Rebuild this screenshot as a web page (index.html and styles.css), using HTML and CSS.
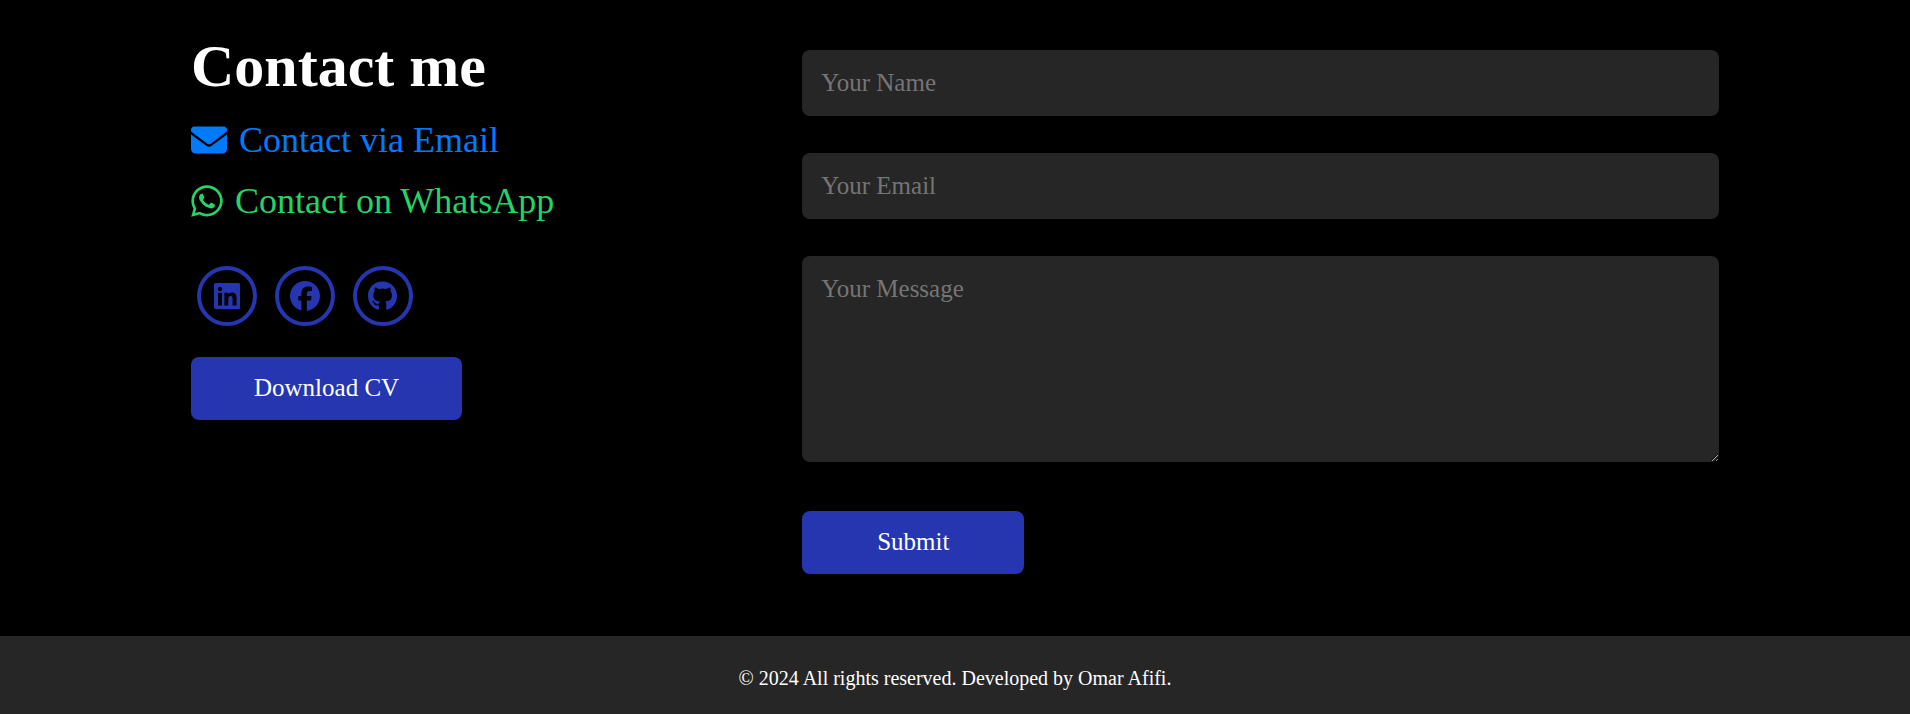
FILE: index.html
```html
<!DOCTYPE html>
<html lang="en">
<head>
<meta charset="utf-8">
<meta name="viewport" content="width=device-width, initial-scale=1">
<title>Contact me</title>
<link rel="stylesheet" href="styles.css">
</head>
<body>
<section class="contact">
  <div class="contact-info">
    <h1 class="title">Contact me</h1>
    <a class="contact-link email" href="#email">
      <svg class="envelope" viewBox="0 0 512 512" aria-hidden="true"><path d="M48 64C21.500 64 0 85.500 0 112c0 15.100 7.100 29.300 19.200 38.400L236.800 313.600c11.400 8.500 27 8.500 38.400 0L492.800 150.400c12.100-9.100 19.200-23.300 19.200-38.400c0-26.500-21.500-48-48-48H48zM0 176V384c0 35.300 28.700 64 64 64H448c35.300 0 64-28.700 64-64V176L294.400 339.200c-22.800 17.100-54 17.100-76.800 0L0 176z"/></svg>
      <span>Contact via Email</span>
    </a>
    <a class="contact-link whatsapp" href="#whatsapp">
      <svg class="phone" viewBox="0 0 448 512" aria-hidden="true"><path d="M380.900 97.100C339 55.100 283.200 32 223.900 32c-122.400 0-222 99.600-222 222 0 39.100 10.200 77.300 29.600 111L0 480l117.700-30.900c32.400 17.700 68.900 27 106.100 27h.1c122.300 0 224.100-99.600 224.100-222 0-59.300-25.200-115-67.100-157zm-157 341.600c-33.200 0-65.700-8.900-94-25.700l-6.700-4-69.800 18.300L72 359.200l-4.400-7c-18.500-29.400-28.200-63.300-28.200-98.200 0-101.700 82.800-184.500 184.600-184.500 49.300 0 95.600 19.200 130.400 54.100 34.800 34.900 56.200 81.200 56.100 130.500 0 101.800-84.900 184.600-186.600 184.600zm101.200-138.200c-5.500-2.800-32.800-16.200-37.900-18-5.100-1.900-8.800-2.800-12.500 2.800-3.700 5.600-14.300 18-17.600 21.800-3.200 3.700-6.500 4.200-12 1.400-32.600-16.300-54-29.100-75.500-66-5.700-9.800 5.700-9.100 16.300-30.300 1.800-3.700.9-6.900-.5-9.700-1.400-2.800-12.500-30.100-17.100-41.200-4.500-10.800-9.100-9.300-12.500-9.500-3.200-.2-6.900-.2-10.600-.2-3.700 0-9.700 1.400-14.800 6.900-5.100 5.600-19.400 19-19.400 46.300 0 27.300 19.900 53.700 22.600 57.400 2.800 3.700 39.100 59.700 94.800 83.800 35.200 15.200 49 16.500 66.600 13.900 10.700-1.600 32.800-13.400 37.400-26.400 4.600-13 4.600-24.100 3.200-26.400-1.300-2.500-5-3.900-10.500-6.600z"/></svg>
      <span>Contact on WhatsApp</span>
    </a>
    <div class="social">
      <a class="social-link" href="#linkedin" aria-label="LinkedIn">
        <svg viewBox="0 0 448 512" aria-hidden="true"><path d="M416 32H31.900C14.300 32 0 46.500 0 64.300v383.400C0 465.500 14.300 480 31.900 480H416c17.600 0 32-14.500 32-32.300V64.300c0-17.800-14.400-32.300-32-32.300zM135.400 416H69V202.200h66.500V416zm-33.200-243c-21.300 0-38.500-17.300-38.500-38.500S80.900 96 102.200 96c21.200 0 38.500 17.300 38.500 38.500 0 21.300-17.200 38.500-38.500 38.500zm282.100 243h-66.400V312c0-24.800-.5-56.700-34.500-56.700-34.600 0-39.900 27-39.900 54.900V416h-66.400V202.200h63.700v29.200h.9c8.900-16.800 30.600-34.500 62.900-34.500 67.200 0 79.700 44.300 79.700 101.900V416z"/></svg>
      </a>
      <a class="social-link" href="#facebook" aria-label="Facebook">
        <svg viewBox="0 0 512 512" aria-hidden="true"><path d="M512 256C512 114.600 397.400 0 256 0S0 114.600 0 256C0 376 82.700 476.800 194.200 504.500V334.200H141.400V256h52.800V222.300c0-87.100 39.400-127.500 125-127.500c16.200 0 44.200 3.200 55.700 6.400V172c-6-.6-16.500-1-29.600-1c-42 0-58.200 15.900-58.200 57.200V256h83.600l-14.400 78.200H287V510.100C413.800 494.800 512 386.900 512 256z"/></svg>
      </a>
      <a class="social-link" href="#github" aria-label="GitHub">
        <svg viewBox="0 0 496 512" aria-hidden="true"><path d="M165.900 397.400c0 2-2.300 3.600-5.200 3.600-3.300.3-5.600-1.300-5.600-3.600 0-2 2.300-3.600 5.200-3.600 3-.3 5.600 1.300 5.600 3.600zm-31.100-4.500c-.7 2 1.300 4.300 4.300 4.900 2.600 1 5.600 0 6.200-2s-1.300-4.300-4.300-5.200c-2.600-.7-5.500.3-6.200 2.300zm44.200-1.700c-2.900.7-4.900 2.600-4.600 4.900.3 2 2.900 3.300 5.900 2.600 2.900-.7 4.900-2.600 4.600-4.600-.3-1.900-3-3.200-5.900-2.900zM244.800 8C106.100 8 0 113.300 0 252c0 110.900 69.800 205.800 169.500 239.200 12.800 2.300 17.300-5.600 17.300-12.100 0-6.200-.3-40.400-.3-61.400 0 0-70 15-84.700-29.800 0 0-11.400-29.100-27.800-36.600 0 0-22.900-15.700 1.600-15.400 0 0 24.900 2 38.600 25.800 21.900 38.600 58.600 27.500 72.900 20.900 2.300-16 8.800-27.100 16-33.700-55.900-6.200-112.300-14.300-112.300-110.500 0-27.500 7.600-41.300 23.600-58.900-2.600-6.500-11.100-33.300 2.600-67.900 20.900-6.500 69 27 69 27 20-5.600 41.500-8.500 62.800-8.500s42.800 2.900 62.800 8.500c0 0 48.100-33.600 69-27 13.700 34.700 5.200 61.400 2.600 67.900 16 17.700 25.800 31.500 25.800 58.900 0 96.500-58.900 104.200-114.800 110.500 9.200 7.900 17 22.900 17 46.400 0 33.700-.3 75.400-.3 83.600 0 6.500 4.600 14.400 17.300 12.100C428.200 457.800 496 362.900 496 252 496 113.300 383.500 8 244.800 8z"/></svg>
      </a>
    </div>
    <a class="button" href="#cv">Download CV</a>
  </div>
  <form class="contact-form">
    <input class="field" type="text" name="name" placeholder="Your Name" aria-label="Your Name" required>
    <input class="field" type="email" name="email" placeholder="Your Email" aria-label="Your Email" required>
    <textarea class="field message" name="message" rows="6" placeholder="Your Message" aria-label="Your Message"></textarea>
    <button class="button submit" type="submit">Submit</button>
  </form>
</section>
<footer class="footer">
  <p class="copyright">© 2024 All rights reserved. Developed by Omar Afifi.</p>
</footer>
</body>
</html>
```
FILE: styles.css
```css
* {
  box-sizing: border-box;
  margin: 0;
  padding: 0;
}

body {
  min-height: 100vh;
  display: flex;
  flex-direction: column;
  background: #000;
  color: #fff;
  font-family: "Liberation Serif", "Times New Roman", serif;
}

.contact {
  display: grid;
  grid-template-columns: 2fr 3fr;
  padding: 30px 10% 62px;
}

.contact-info {
  display: flex;
  flex-direction: column;
  align-items: flex-start;
}

.title {
  margin-bottom: -1px;
  font-size: 60px;
  line-height: 72px;
}

.contact-link {
  display: flex;
  align-items: center;
  gap: 12px;
  margin-top: 17px;
  font-size: 36px;
  line-height: 44px;
  text-decoration: none;
}

.contact-link svg {
  height: 36px;
  fill: currentColor;
}

.envelope {
  width: 36px;
}

.phone {
  width: 32px;
}

.email {
  color: #007bff;
}

.whatsapp {
  color: #25d366;
}

.social {
  display: flex;
  gap: 18px;
  padding: 43px 6px 31px;
}

.social-link {
  display: flex;
  align-items: center;
  justify-content: center;
  width: 60px;
  height: 60px;
  border: 4px solid #2536b0;
  border-radius: 50%;
  color: #2536b0;
}

.social-link svg {
  height: 30px;
  flex: none;
  fill: currentColor;
}

.button {
  padding: 16px 63px 18px;
  border: 0;
  border-radius: 8px;
  background: #2536b0;
  color: #fff;
  font-family: inherit;
  font-size: 25px;
  line-height: 29px;
  text-align: center;
  text-decoration: none;
  cursor: pointer;
}

.contact-form {
  display: flex;
  flex-direction: column;
  align-items: flex-start;
  gap: 37px;
  padding-top: 20px;
}

.field {
  display: block;
  width: 100%;
  padding: 19px;
  border: 0;
  border-radius: 8px;
  outline: 0;
  background: #262626;
  color: #fff;
  font-family: inherit;
  font-size: 25px;
  line-height: 28px;
}

.field::placeholder {
  color: #757575;
}

.message {
  resize: vertical;
}

.submit {
  margin-top: 12px;
  padding: 16px 75px 18px;
}

.footer {
  flex: 1;
  padding: 30px 10%;
  background: #262626;
  text-align: center;
}

.copyright {
  font-size: 20px;
  line-height: 24px;
}
```
